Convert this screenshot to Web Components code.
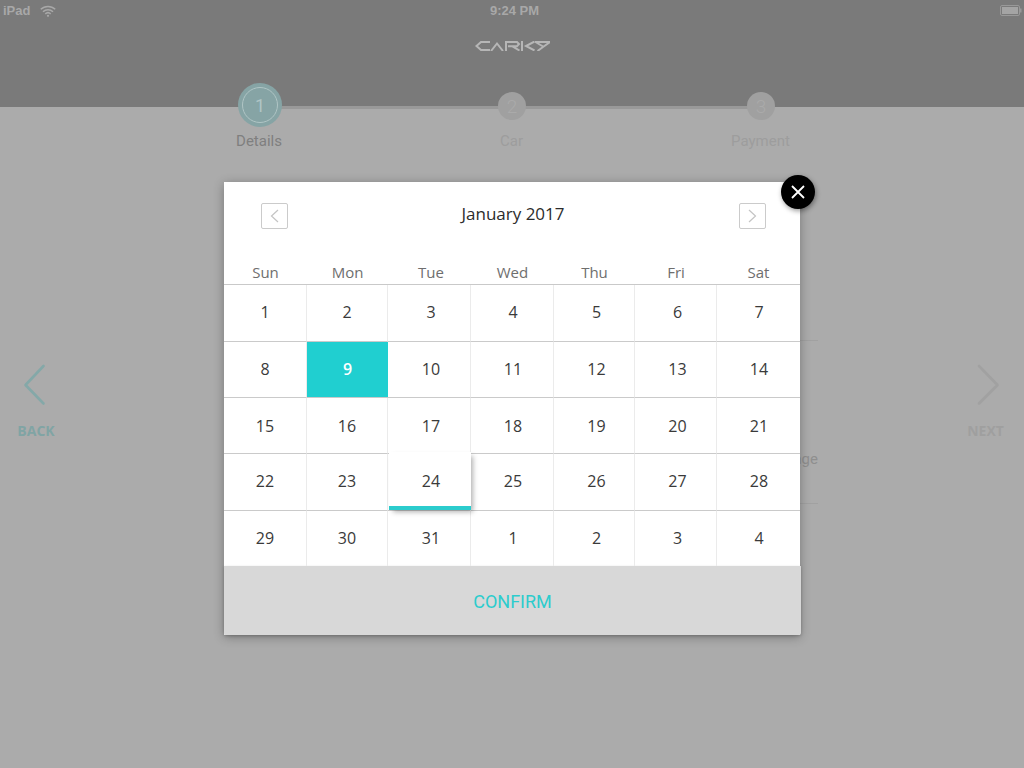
<!DOCTYPE html>
<html><head><meta charset="utf-8"><title>Carky</title>
<style>html,body{margin:0;padding:0;background:#ababab}</style></head>
<body>
<app-shell></app-shell>
<script>
function def(name, html){
  customElements.define(name, class extends HTMLElement{
    connectedCallback(){
      if(this.shadowRoot) return;
      const r=this.attachShadow({mode:'open'});
      r.innerHTML=typeof html==='function'?html(this):html;
    }
  });
}
def('status-bar',`<style>
:host{display:flex;align-items:center;height:20px;padding:0 2px 0 3px;box-sizing:border-box;position:relative;font:bold 13px "Liberation Sans",sans-serif;color:#a8a8a8}
.l{display:flex;align-items:center;gap:10px;flex:1}
.l svg{margin-top:1px}
.t{flex:1;text-align:center;padding-left:4px}
.r{flex:1;display:flex;justify-content:flex-end}
</style>
<div class="l"><span>iPad</span><svg width="16" height="12" viewBox="0 0 16 12" fill="none" stroke="#a8a8a8" stroke-width="1.5"><path d="M.8 4.3C4.8.4 11.200.4 15.200 4.300"/><path d="M3 6.700C5.800 4 10.200 4 13 6.700"/><path d="M5.300 8.900C6.800 7.500 9.200 7.500 10.700 8.900"/><circle cx="8" cy="10.800" r="1.100" fill="#a8a8a8" stroke="none"/></svg></div>
<div class="t">9:24 PM</div>
<div class="r"><svg width="22" height="11" viewBox="0 0 22 11"><rect x=".5" y=".5" width="19" height="10" rx="1.500" fill="none" stroke="#999"/><rect x="2" y="2" width="16" height="7" fill="#a4a4a4"/><rect x="20" y="3.500" width="1.500" height="4" fill="#999"/></svg></div>`);
def('brand-header',`<style>
:host{display:flex;justify-content:center;height:87px;padding-top:21px;box-sizing:border-box}
svg{display:block;margin-left:1px}
</style>
<svg width="75" height="10" viewBox="475 41 75 10" fill="none" stroke="#b6b6b6" stroke-width="2"><path d="M490 42H481L476.500 46L481 50H490"/><path d="M491 51L497 43.500L503 51"/><path d="M506 51V42H517L519 44L517 46.200H508M512 46.200L519.500 50.500"/><path d="M522 41V51M534.500 41.500L526 46L534.500 50.500"/><path d="M535.500 42L543 46.500M535 42H550L543 47L537.500 51"/></svg>`);
def('step-dot',h=>{
  const on=h.hasAttribute('active');
  return `<style>
:host{display:flex;flex-direction:column;align-items:center;width:120px;font:15px Roboto,sans-serif}
.c{box-sizing:border-box;display:flex;align-items:center;justify-content:center;border-radius:50%;position:relative;
 width:${on?44:28}px;height:${on?44:28}px;margin-top:${on?0:9}px;background:${on?'#86a4a5':'#a0a0a0'};color:${on?'#b0c5c5':'#aaa'};font-size:${on?18:19}px;font-weight:${on?400:300}}
.c::after{content:"";display:${on?'block':'none'};position:absolute;inset:4px;border:1px solid #b0c5c5;border-radius:50%}
.l{margin-top:${on?5:12}px;line-height:18px;color:${on?'#7f7f7f':'#9d9d9d'};margin-left:${on?-2:-1}px}
</style><div class="c">${h.getAttribute('n')}</div><div class="l"><slot></slot></div>`});
def('step-bar',`<style>
:host{display:block;height:77px;margin-top:-24px;position:relative}
.line{position:absolute;left:260px;width:500px;top:23px;height:3px;background:#999}
.row{position:relative;display:flex;padding-left:200px}
::slotted(step-dot:nth-child(2)){margin-left:132px}
::slotted(step-dot:nth-child(3)){margin-left:129px}
</style><div class="line"></div><div class="row"><slot></slot></div>`);
def('nav-arrow',h=>{
  const next=h.hasAttribute('next');
  const col=next?'#a1a1a1':'#84a8a8';
  return `<style>
:host{display:flex;flex-direction:column;align-items:center;width:${next?77:72}px;padding-top:204px;box-sizing:border-box;font:700 14px "Open Sans",sans-serif;color:${next?'#9f9f9f':'#80a4a4'}}
svg{display:block;margin-left:${next?5:-5}px}
.l{margin-top:15px;line-height:20px}
</style><svg width="24" height="42" viewBox="0 0 24 42" fill="none" stroke="${col}" stroke-width="2.600" stroke-linecap="round" stroke-linejoin="round"><path d="${next?'M3 2L21.500 21L3 39.500':'M21.500 2L3.500 21L21.500 39.500'}"/></svg><div class="l"><slot></slot></div>`});
def('form-panel',`<style>
:host{display:block;margin-left:auto;width:500px;margin-top:180px;font:15px Roboto,sans-serif;color:#8f8f8f}
.r{border-top:1px solid #a1a1a1;border-bottom:1px solid #a1a1a1;height:162px;display:flex;justify-content:flex-end;align-items:flex-start}
.r span{margin-top:108px;line-height:20px}
</style><div class="r"><span>Language</span></div>`);
def('cal-grid',()=>{
  const cols=[83,81,83,83,81,82,83];
  const rows=[57,56,56,57,55];
  const pb=[2,1,0,2,2];
  const shift=[0,0,4,2,5,4,1];
  const wd=['Sun','Mon','Tue','Wed','Thu','Fri','Sat'];
  const days=[1,2,3,4,5,6,7,8,9,10,11,12,13,14,15,16,17,18,19,20,21,22,23,24,25,26,27,28,29,30,31,1,2,3,4];
  let h=`<style>
:host{display:block;font-family:"Open Sans",sans-serif}
.g{display:grid;grid-template-columns:${cols.map(c=>c+'px').join(' ')}}
.w{line-height:20px;text-align:center;font-size:15px;color:#6e6e6e;border-bottom:1px solid #c9c9c9;box-sizing:content-box;height:22px}
.d{box-sizing:border-box;display:flex;align-items:center;justify-content:center;font-size:16px;color:#3a3a3a;border-right:1px solid #ebebeb;border-bottom:1px solid #cacaca;position:relative}
.d.c7{border-right:0}.d.r5{border-bottom:0}
.d.sel{background:#20cfd0;color:#fff;font-weight:600;border-right:0}
.d.today{z-index:1;border-right-color:transparent}
.d.today::before{content:"";position:absolute;left:1px;right:-1px;top:-2px;bottom:0;background:#fff;border-bottom:4px solid #2ccccd;box-sizing:border-box;box-shadow:3px 3px 5px -1px rgba(0,0,0,.3)}
.d span{position:relative}
</style><div class="g" role="grid">`;
  wd.forEach((w,i)=>h+=`<div class="w" style="padding-left:${[0,0,3,0,0,0,0][i]}px">${w}</div>`);
  days.forEach((d,i)=>{
    const c=i%7,r=Math.floor(i/7);
    const cls=['d','c'+(c+1),'r'+(r+1)];
    if(i===8)cls.push('sel'); if(i===23)cls.push('today');
    h+=`<div class="${cls.join(' ')}" style="height:${rows[r]}px;padding-left:${shift[c]}px;padding-bottom:${pb[r]}px"><span>${d}</span></div>`;
  });
  return h+'</div>';
});
def('icon-box',h=>{
  const n=h.hasAttribute('next');
  return `<style>:host{display:block;width:27px;height:26px;box-sizing:border-box;border:1px solid #cbcbcb;border-radius:2px}svg{display:block}</style>
<svg width="25" height="24" viewBox="0 0 25 24" fill="none" stroke="#c4c4c4" stroke-width="1.200"><path d="${n?'M9 6L15.500 12L9 18':'M16 6L9.500 12L16 18'}"/></svg>`});
def('cal-head',`<style>
:host{display:flex;align-items:flex-start;justify-content:space-between;height:80px;padding:21px 34px 0 37px;box-sizing:border-box;font:17px "Open Sans",sans-serif;color:#2c2c2c}
.m{line-height:22px;margin-left:-1px}
</style><icon-box></icon-box><div class="m">January 2017</div><icon-box next></icon-box>`);
def('close-btn',`<style>
:host{display:flex;align-items:center;justify-content:center;position:absolute;right:-15px;top:-7px;width:34px;height:34px;border-radius:50%;background:#000;box-shadow:1px 2px 5px rgba(0,0,0,.4)}
svg{display:block}
</style><svg width="14" height="14" viewBox="0 0 14 14" stroke="#fff" stroke-width="1.800"><path d="M1 1L13 13M13 1L1 13"/></svg>`);
def('date-modal',`<style>
:host{display:block;position:relative;width:576px;background:#fff;box-shadow:0 2px 10px rgba(0,0,0,.3)}
.f{box-sizing:border-box;width:577px;height:69px;padding-top:2px;background:#d8d8d8;display:flex;align-items:center;justify-content:center;font:400 18px Roboto,sans-serif;color:#2ccccd;border-radius:0 0 2px 2px;box-shadow:0 1px 3px rgba(0,0,0,.2)}
</style><cal-head></cal-head><cal-grid></cal-grid><div class="f">CONFIRM</div><close-btn></close-btn>`);
def('modal-layer',`<style>
:host{display:block;position:absolute;inset:0;padding:182px 0 0 224px;box-sizing:border-box}
</style><date-modal></date-modal>`);
def('app-shell',`<style>
:host{display:block;position:relative;width:1024px;height:768px;overflow:hidden;background:#ababab}
.top{background:#7a7a7a;height:107px}
.stage{display:flex;align-items:flex-start;justify-content:space-between}
.mid{flex:1;display:flex;padding-right:129px}
</style>
<div class="top"><status-bar></status-bar><brand-header></brand-header></div>
<step-bar><step-dot n="1" active>Details</step-dot><step-dot n="2">Car</step-dot><step-dot n="3">Payment</step-dot></step-bar>
<div class="stage"><nav-arrow>BACK</nav-arrow><div class="mid"><form-panel></form-panel></div><nav-arrow next>NEXT</nav-arrow></div>
<modal-layer></modal-layer>`);
</script>
</body></html>
